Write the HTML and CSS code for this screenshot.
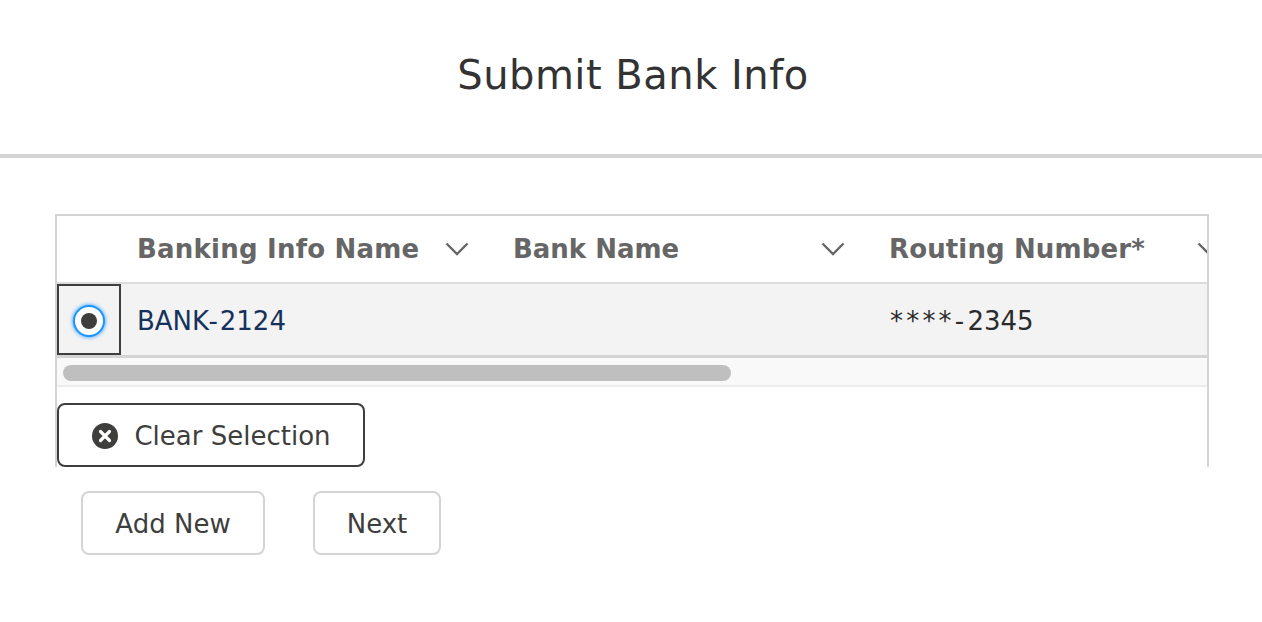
FILE: index.html
```html
<!DOCTYPE html>
<html lang="en">
<head>
<meta charset="utf-8">
<title>Submit Bank Info</title>
<link rel="stylesheet" href="styles.css">
</head>
<body>
<header class="page-header"><h1 class="page-title">Submit Bank Info</h1></header>
<main class="content">
  <section class="panel">
    <div class="grid-scroll">
      <div class="grid-row grid-head">
        <div class="cell-select"></div>
        <div class="col"><span class="col-label">Banking Info Name</span><svg class="chev" viewBox="0 0 24 14"><path d="M1.5 1.5 12 12 22.5 1.5"/></svg></div>
        <div class="col"><span class="col-label tight">Bank Name</span><svg class="chev" viewBox="0 0 24 14"><path d="M1.5 1.5 12 12 22.5 1.5"/></svg></div>
        <div class="col"><span class="col-label mid">Routing Number*</span><svg class="chev" viewBox="0 0 24 14"><path d="M1.5 1.5 12 12 22.5 1.5"/></svg></div>
      </div>
      <div class="grid-row grid-body">
        <div class="cell-select focused"><span class="radio"><span class="radio-dot"></span></span></div>
        <div class="col"><a class="link" href="#">BAN<span class="wide-link">K-</span>2124</a></div>
        <div class="col"></div>
        <div class="col"><span class="masked"><span class="wide-mask">****-</span>2345</span></div>
      </div>
    </div>
    <div class="scrollbar"><div class="thumb"></div></div>
    <div class="panel-actions">
      <button class="btn btn-dark" type="button"><svg class="clear-icon" viewBox="0 0 26 26"><circle cx="13" cy="13" r="13" fill="#3e3e3c"/><path d="M8.5 8.5l9 9M17.5 8.5l-9 9" stroke="#fff" stroke-width="3.2" stroke-linecap="round"/></svg>Clear Selection</button>
    </div>
  </section>
  <div class="actions">
    <button class="btn btn-light add" type="button">Add New</button>
    <button class="btn btn-light next" type="button">Next</button>
  </div>
</main>
</body>
</html>
```
FILE: styles.css
```css
* { box-sizing: border-box; }
html, body { margin: 0; padding: 0; background: #fff; }
body { font-family: "DejaVu Sans", sans-serif; color: #333; height: 622px; overflow: hidden; }

.page-header { height: 158px; border-bottom: 4px solid #d4d4d4; display: flex; justify-content: center; padding: 48px 0 0 4px; }
.page-title { margin: 0; font-size: 40px; font-weight: 400; line-height: 54px; color: #333; letter-spacing: 0.5px; }

.content { padding: 56px 53px 0 55px; }
.panel { border: 2px solid #d4d4d4; border-bottom: 0; }

.grid-scroll { overflow: hidden; }
.grid-row { display: flex; width: max-content; }
.grid-head { height: 68px; background: #fff; box-shadow: inset 0 -2px 0 #dcdcdc; }
.grid-body { height: 71px; background: #f3f3f3; }

.cell-select { width: 64px; flex: none; display: flex; align-items: center; justify-content: center; }
.cell-select.focused { border: 2px solid #3e3e3c; }
.col { width: 376px; flex: none; padding: 0 0 0 16px; display: flex; align-items: center; font-size: 26px; color: #2b2b2b; position: relative; }
.grid-head .col { padding-bottom: 2px; }
.grid-body .col { padding-top: 3px; }
.col-label { font-weight: 700; color: #666; font-size: 26px; white-space: nowrap; letter-spacing: 0.22px; }
.col-label.tight { letter-spacing: 0; }
.col-label.mid { letter-spacing: 0.13px; }
.chev { position: absolute; left: 324px; top: 26px; width: 24px; height: 14px; fill: none; stroke: #666; stroke-width: 2.4; }
.link { color: #16325c; text-decoration: none; }
.wide-link { letter-spacing: 2px; }
.masked { margin-left: 1px; }
.wide-mask { letter-spacing: 3.2px; }

.radio { width: 32px; height: 32px; margin-top: 3px; border-radius: 50%; background: #fff; border: 2px solid #1b96ff; box-shadow: 0 0 4px #1b96ff; display: flex; align-items: center; justify-content: center; }
.radio-dot { width: 16px; height: 16px; border-radius: 50%; background: #3e3e3c; }

.scrollbar { height: 32px; background: #f9f9f9; border-top: 3px solid #d4d4d4; border-bottom: 2px solid #ececec; padding: 7px 0 0 6px; }
.thumb { width: 668px; height: 16px; border-radius: 8px; background: #bfbfbf; }

.panel-actions { padding: 16px 0 0 0; display: flex; }

.btn { font-family: inherit; font-size: 26px; height: 64px; background: #fff; color: #3e3e3c; display: inline-flex; align-items: center; justify-content: center; padding: 2px 0 0; }
.btn-dark { width: 308px; border: 2px solid #3e3e3c; border-radius: 8px; padding-left: 1px; }
.btn-light { border: 2px solid #d4d4d4; border-radius: 8px; }
.clear-icon { width: 26px; height: 26px; margin-right: 16px; }
.actions { display: flex; gap: 48px; padding: 24px 0 0 26px; }
.add { width: 184px; }
.next { width: 128px; }
```
